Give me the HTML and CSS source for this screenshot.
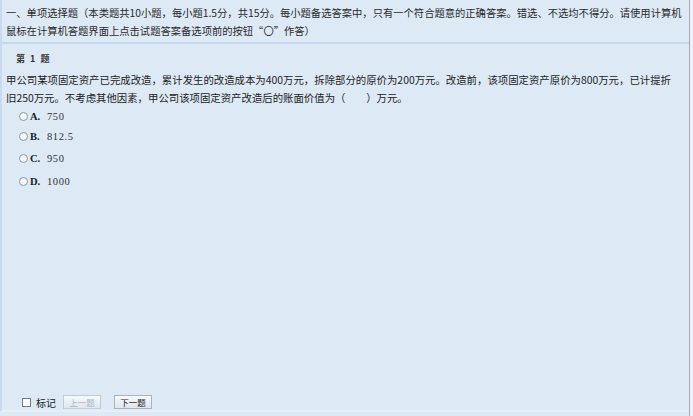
FILE: index.html
```html
<!DOCTYPE html>
<html lang="zh-CN">
<head>
<meta charset="utf-8">
<title>单项选择题</title>
<link rel="stylesheet" href="styles.css">
</head>
<body>
<div class="page">
  <div class="main">
    <div class="intro"><span class="line">一、单项选择题（本类题共10小题，每小题1.5分，共15分。每小题备选答案中，只有一个符合题意的正确答案。错选、不选均不得分。请使用计算机</span><span class="line">鼠标在计算机答题界面上点击试题答案备选项前的按钮“〇”作答）</span></div>
    <div class="qno">第 1 题</div>
    <div class="stem">甲公司某项固定资产已完成改造，累计发生的改造成本为400万元，拆除部分的原价为200万元。改造前，该项固定资产原价为800万元，已计提折旧250万元。不考虑其他因素，甲公司该项固定资产改造后的账面价值为（　　）万元。</div>
    <ul class="options">
      <li class="option"><span class="radio"></span><span class="letter">A.</span><span class="val">750</span></li>
      <li class="option"><span class="radio"></span><span class="letter">B.</span><span class="val">812.5</span></li>
      <li class="option"><span class="radio"></span><span class="letter">C.</span><span class="val">950</span></li>
      <li class="option"><span class="radio"></span><span class="letter">D.</span><span class="val">1000</span></li>
    </ul>
    <div class="spacer"></div>
    <div class="footer">
      <span class="check"></span><span class="mark">标记</span>
      <span class="btn disabled">上一题</span>
      <span class="btn">下一题</span>
    </div>
  </div>
  <div class="scroll"></div>
</div>
</body>
</html>
```
FILE: styles.css
```css
html, body {
  margin: 0;
  padding: 0;
}
body {
  width: 693px;
  height: 416px;
  overflow: hidden;
  background: #dde9f5;
  font-family: "Noto Sans CJK SC", "Noto Sans", sans-serif;
  color: #222;
}
.page {
  display: flex;
  height: 416px;
}
.main {
  flex: 1;
  display: flex;
  flex-direction: column;
  border-left: 2px solid #c9daef;
  border-bottom: 2px solid #e6eef7;
  box-sizing: border-box;
  height: 412px;
  min-width: 0;
}
.scroll {
  width: 3px;
  border-left: 1px solid #a4adb7;
  background: #edf1f5;
}
.intro {
  font-size: 10.3px;
  line-height: 18px;
  padding: 4px 0 2px 4px;
  border-bottom: 2px solid #c6d8ef;
  color: #2a2a2a;
}
.line {
  display: block;
  white-space: nowrap;
}
.qno {
  font-size: 9px;
  font-weight: bold;
  word-spacing: 3px;
  padding: 8px 0 0 14px;
  line-height: 14px;
  color: #333;
}
.stem {
  font-size: 10.4px;
  line-height: 18px;
  padding: 5px 10px 0 4px;
  color: #222;
}
.options {
  list-style: none;
  margin: 0;
  padding: 0 0 0 17px;
}
.option {
  display: flex;
  align-items: center;
  height: 22.5px;
}
.option:first-child {
  height: 18px;
}
.radio {
  width: 7px;
  height: 7px;
  border: 1px solid #8a98a8;
  border-radius: 50%;
  background: #f4f7fb;
  margin-right: 2px;
}
.letter {
  font-family: "Liberation Serif", serif;
  font-weight: bold;
  font-size: 10.5px;
  width: 17px;
  color: #222;
}
.val {
  font-family: "Liberation Serif", serif;
  font-size: 10.5px;
  letter-spacing: 0.6px;
  color: #333;
}
.spacer {
  flex: 1;
}
.footer {
  display: flex;
  align-items: center;
  padding: 0 0 0 20px;
  height: 16px;
  font-size: 10px;
}
.check {
  width: 7px;
  height: 7px;
  border: 1px solid #6f7c8a;
  background: #fff;
  margin-right: 5px;
}
.mark {
  margin-right: 7px;
  color: #222;
}
.btn {
  display: inline-flex;
  align-items: center;
  justify-content: center;
  width: 36px;
  height: 12px;
  border: 1px solid #a9b4c0;
  background: linear-gradient(#f7f9fc, #dfe6ee);
  font-size: 8.5px;
  color: #222;
  margin-right: 13px;
}
.btn.disabled {
  color: #a8b8cc;
  border-color: #c2ccd8;
}
```
